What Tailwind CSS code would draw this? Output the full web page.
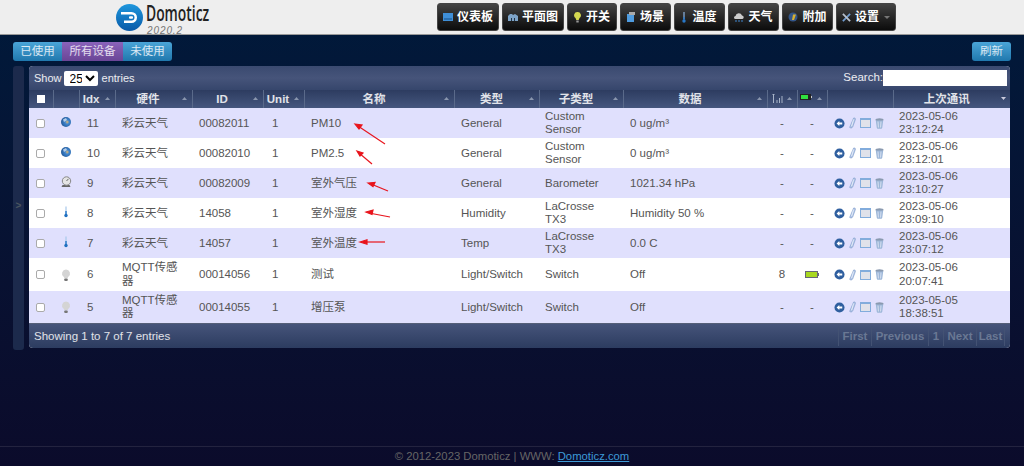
<!DOCTYPE html>
<html lang="en">
<head>
    <meta charset="UTF-8">
    <meta name="viewport" content="width=device-width, initial-scale=1.0">
    <title>Domoticz</title>
    <script src="https://cdn.jsdelivr.net/npm/@tailwindcss/browser@4"></script>
</head>
<body class="h-[466px] w-[1024px] overflow-hidden font-['Liberation_Sans','Noto_Sans_CJK_SC',sans-serif] text-[11.5px] text-[#555]">
<svg class="absolute h-0 w-0">
    <defs>
        <radialGradient id="globe" cx="0.62" cy="0.5" r="0.7"><stop offset="0" stop-color="#e8b868"/><stop offset="0.3" stop-color="#3f86d0"/><stop offset="1" stop-color="#1c4f8c"/></radialGradient>
    </defs>
    <symbol id="i-globe" viewBox="0 0 16 16"><circle cx="8" cy="8" r="5" fill="url(#globe)"/><path d="M5 5.500l3-1.500 1 2-3 2z" fill="#e8eef8" opacity=".7"/></symbol>
    <symbol id="i-gauge" viewBox="0 0 16 16"><path d="M3.500 13h9l-1-2h-7z" fill="#666"/><circle cx="8.500" cy="7" r="4.200" fill="#e4e4e4" stroke="#888"/><path d="M8.500 7l2-2.200" stroke="#666"/></symbol>
    <symbol id="i-thermo" viewBox="0 0 16 16"><rect x="7.400" y="2.500" width="1.200" height="8" fill="#a8c8ec"/><rect x="7.300" y="7" width="1.400" height="4" fill="#2878c8"/><circle cx="8" cy="11.500" r="1.700" fill="#2070c0"/></symbol>
    <symbol id="i-bulb" viewBox="0 0 16 16"><path d="M8 2.500a4 4 0 0 0-2.400 7.200c.5.5.7 1 .7 1.600h3.400c0-.6.2-1.100.7-1.600A4 4 0 0 0 8 2.500z" fill="#d4d4d4"/><rect x="6.300" y="11.500" width="3.400" height="2.500" rx=".8" fill="#777"/></symbol>
    <symbol id="i-back" viewBox="0 0 12 12"><circle cx="6" cy="6" r="5.500" fill="#2f5f9f"/><path d="M2.800 6l3-2.600v1.600h3.200v2H5.800v1.600z" fill="#fff"/></symbol>
    <symbol id="i-pen" viewBox="0 0 8 13"><path d="M5.300.800c1.400-.3 2.400.5 2 1.700L4.200 11c-.6 1.400-3.200 1.600-3.400.4z" fill="#b4c8e8" stroke="#7a98c8" stroke-width=".7"/><path d="M5.200 2.500L3 10" stroke="#f2f6fc" stroke-width=".9"/></symbol>
    <symbol id="i-log" viewBox="0 0 11 10"><rect x=".5" y=".5" width="10" height="9" fill="#e0e2ea" stroke="#82acdc"/><rect x=".5" y=".5" width="10" height="1.500" fill="#82acdc"/></symbol>
    <symbol id="i-trash" viewBox="0 0 9 11"><ellipse cx="4.500" cy="1.800" rx="4" ry="1.500" fill="#8a9ab0"/><path d="M.8 2.500h7.400L7.200 10a1 1 0 0 1-1 .8H2.800a1 1 0 0 1-1-.8z" fill="#9cb6d8"/><path d="M3 3.500l.4 6M6 3.500l-.4 6" stroke="#e8eef8" stroke-width=".8"/></symbol>
    <symbol id="i-sort" viewBox="0 0 7 4"><path d="M0 4l3.500-4L7 4z"/></symbol>
</svg>

<div class="flex h-full flex-col bg-gradient-to-b from-[#001a3b] to-[#0b0b2b]">
    <!-- Top bar -->
    <header class="relative h-[35px] shrink-0 overflow-hidden border-b border-[#999] bg-[#eeeeee]">
        <div class="absolute left-[116px] top-[4px] flex h-[27px] w-[27px] items-center justify-center rounded-full bg-gradient-to-b from-[#1f97dd] to-[#0a5aa8]">
            <svg width="17" height="11" viewBox="0 0 17 11"><path d="M0 0h10.500a5.500 5.500 0 0 1 0 11H3V8.500h7.500a3 3 0 0 0 0-6H0z" fill="#fff"/><rect x="8" y="4.300" width="4" height="2.400" rx="1" fill="#fff"/></svg>
        </div>
        <div class="absolute left-[146px] top-[3px] origin-left scale-x-[0.66] font-['Open_Sans',sans-serif] text-[21px] leading-[20px] font-semibold whitespace-nowrap text-[#222]">Domoticz</div>
        <div class="absolute left-[147px] top-[26px] text-[10px] leading-[10px] tracking-[0.9px] text-[#777] italic">2020.2</div>
        <nav class="absolute left-[437px] top-[3px] flex gap-[3px] text-[12px] font-bold text-white">
            <a class="flex h-[28px] w-[62px] items-center justify-center gap-[4px] rounded-[3px] border border-[#444] bg-gradient-to-b from-[#444] to-[#0c0c0c]"><svg width="10" height="8" viewBox="0 0 10 8"><rect width="10" height="8" fill="#3f8fd8"/><rect x="1" y="5" width="8" height="2" fill="#2a6fb0"/></svg>仪表板</a>
            <a class="flex h-[28px] w-[62px] items-center justify-center gap-[4px] rounded-[3px] border border-[#444] bg-gradient-to-b from-[#444] to-[#0c0c0c]"><svg width="10" height="8" viewBox="0 0 10 8"><path d="M0 3l2-2h2l1 1 2-1 3 2v5H0z" fill="#7ea4c8"/><path d="M3 8V5h1v3zM6 8V5h1v3z" fill="#234"/></svg>平面图</a>
            <a class="flex h-[28px] w-[50px] items-center justify-center gap-[5px] rounded-[3px] border border-[#444] bg-gradient-to-b from-[#444] to-[#0c0c0c]"><svg width="7" height="11" viewBox="0 0 7 11"><path d="M3.500 0a3.300 3.300 0 0 0-2 6L2.300 8h2.400l.8-2a3.300 3.300 0 0 0-2-6z" fill="#d4d850"/><rect x="2.300" y="8.500" width="2.400" height="2" fill="#999"/></svg>开关</a>
            <a class="flex h-[28px] w-[51px] items-center justify-center gap-[5px] rounded-[3px] border border-[#444] bg-gradient-to-b from-[#444] to-[#0c0c0c]"><svg width="8" height="10" viewBox="0 0 8 10"><rect y="2" width="7" height="8" fill="#4f9ce0"/><rect x="2" width="6" height="3" fill="#aaa"/></svg>场景</a>
            <a class="flex h-[28px] w-[51px] items-center justify-center gap-[6px] rounded-[3px] border border-[#444] bg-gradient-to-b from-[#444] to-[#0c0c0c]"><svg width="4" height="11" viewBox="0 0 4 11"><rect x="1.400" width="1.200" height="7" fill="#8cb4e0"/><rect x="1.300" y="5" width="1.400" height="3" fill="#2878c8"/><circle cx="2" cy="9" r="1.700" fill="#2878c8"/></svg>温度</a>
            <a class="flex h-[28px] w-[51px] items-center justify-center gap-[4px] rounded-[3px] border border-[#444] bg-gradient-to-b from-[#444] to-[#0c0c0c]"><svg width="10" height="9" viewBox="0 0 10 9"><path d="M1.500 6a1.500 1.500 0 0 1 0-3A3.400 3.400 0 0 1 8 2.500 1.800 1.800 0 0 1 8.500 6z" fill="#ccc"/><path d="M2 7v2M5 7v2M8 7v2" stroke="#3f86d0"/></svg>天气</a>
            <a class="flex h-[28px] w-[51px] items-center justify-center gap-[4px] rounded-[3px] border border-[#444] bg-gradient-to-b from-[#444] to-[#0c0c0c]"><svg width="10" height="10" viewBox="0 0 10 10"><circle cx="5" cy="5" r="4.500" fill="#33568a"/><path d="M5 2.500h3L6 8H4z" fill="#d8b030"/></svg>附加</a>
            <a class="flex h-[28px] w-[60px] items-center justify-center gap-[4px] rounded-[3px] border border-[#444] bg-gradient-to-b from-[#444] to-[#0c0c0c]"><svg width="9" height="9" viewBox="0 0 10 10"><path d="M1 9l8-8" stroke="#6f9bd0" stroke-width="2"/><path d="M1 1l8 8" stroke="#b8c0cc" stroke-width="2"/></svg>设置<span class="ml-[1px] h-0 w-0 border-x-[3px] border-t-[3px] border-x-transparent border-t-[#777]"></span></a>
        </nav>
    </header>

    <main class="relative flex flex-1 flex-col px-[13px] pt-[7px]">
        <!-- Filter buttons -->
        <div class="flex h-[19px] items-stretch justify-between text-[11.5px] text-white/80">
            <div class="flex overflow-hidden rounded-[3px]">
                <button class="w-[49px] bg-gradient-to-b from-[#4aa5d8] to-[#1f78ad]">已使用</button>
                <button class="w-[61px] bg-gradient-to-b from-[#8a63bb] to-[#6a4596]">所有设备</button>
                <button class="w-[49px] bg-gradient-to-b from-[#4aa5d8] to-[#1f78ad]">未使用</button>
            </div>
            <button class="w-[39px] rounded-[3px] bg-gradient-to-b from-[#4aa5d8] to-[#1f78ad]">刷新</button>
        </div>

        <div class="mt-[5px] flex gap-[5px]">
            <!-- Collapsed side panel -->
            <div class="flex h-[284px] w-[11px] items-center justify-center rounded-[3px] bg-[#1c2a4c] pb-[6px] text-[10px] font-bold text-[#4a5560]">&gt;</div>

            <!-- Devices panel -->
            <div class="h-[282px] w-[981px] overflow-hidden rounded-[4px] bg-white">
                <div class="flex h-[24px] items-center justify-between bg-gradient-to-b from-[#3a4a70] via-[#46547a] to-[#36466c] pr-[3px] pl-[5px] text-[11px] text-white/90">
                    <div class="flex items-center gap-[2px]">Show
                        <select class="mr-[2px] h-[15px] w-[34px] rounded-[2px] bg-white pl-[2px] text-[12px] text-black"><option>25</option></select>
                        entries</div>
                    <div class="flex items-center text-[11.5px]">Search:<input class="h-[16px] w-[124px] bg-white"></div>
                </div>

                <table class="w-full table-fixed border-collapse">
                    <colgroup>
                        <col class="w-[24px]"><col class="w-[26px]"><col class="w-[36px]"><col class="w-[77px]"><col class="w-[71px]"><col class="w-[41px]"><col class="w-[150px]"><col class="w-[85px]"><col class="w-[84px]"><col class="w-[144px]"><col class="w-[30px]"><col class="w-[30px]"><col class="w-[66px]"><col>
                    </colgroup>
                    <thead>
                        <tr class="h-[18px] bg-gradient-to-b from-[#2d3c60] to-[#45567e] pt-[1px] text-[11.5px] font-bold text-white/85">
                            <th class="border-r border-[#5a6a8a]"><span class="mx-auto block h-[8px] w-[8px] bg-white"></span></th>
                            <th class="border-r border-[#5a6a8a]"></th>
                            <th class="relative border-r border-[#5a6a8a] pt-[1px] pr-[12px]">Idx<svg class="absolute top-[7px] right-[5px] fill-[#8a96ae]" width="5" height="3"><use href="#i-sort"/></svg></th>
                            <th class="relative border-r border-[#5a6a8a] pt-[1px] pr-[11px]">硬件<svg class="absolute top-[7px] right-[5px] fill-[#8a96ae]" width="5" height="3"><use href="#i-sort"/></svg></th>
                            <th class="relative border-r border-[#5a6a8a] pt-[1px] pr-[11px]">ID<svg class="absolute top-[7px] right-[5px] fill-[#8a96ae]" width="5" height="3"><use href="#i-sort"/></svg></th>
                            <th class="relative border-r border-[#5a6a8a] pt-[1px] pr-[11px]">Unit<svg class="absolute top-[7px] right-[5px] fill-[#8a96ae]" width="5" height="3"><use href="#i-sort"/></svg></th>
                            <th class="relative border-r border-[#5a6a8a] pt-[1px] pr-[10px]">名称<svg class="absolute top-[7px] right-[5px] fill-[#8a96ae]" width="5" height="3"><use href="#i-sort"/></svg></th>
                            <th class="relative border-r border-[#5a6a8a] pt-[1px] pr-[10px]">类型<svg class="absolute top-[7px] right-[5px] fill-[#8a96ae]" width="5" height="3"><use href="#i-sort"/></svg></th>
                            <th class="relative border-r border-[#5a6a8a] pt-[1px] pr-[10px]">子类型<svg class="absolute top-[7px] right-[5px] fill-[#8a96ae]" width="5" height="3"><use href="#i-sort"/></svg></th>
                            <th class="relative border-r border-[#5a6a8a] pt-[1px] pr-[10px]">数据<svg class="absolute top-[7px] right-[5px] fill-[#8a96ae]" width="5" height="3"><use href="#i-sort"/></svg></th>
                            <th class="relative border-r border-[#5a6a8a]"><svg class="absolute top-[4px] left-[3px]" width="12" height="10" viewBox="0 0 12 10"><path d="M1 0h3M2.500 0v9M6 9V6M8.500 9V4M11 9V2" stroke="#a8b4c8" fill="none"/></svg><svg class="absolute top-[7px] right-[5px] fill-[#8a96ae]" width="5" height="3"><use href="#i-sort"/></svg></th>
                            <th class="relative border-r border-[#5a6a8a]"><svg class="absolute top-[4px] left-[2px]" width="12" height="7" viewBox="0 0 12 7"><rect width="11" height="6" fill="#222"/><rect x="1" y="1" width="7" height="4" fill="#30e040"/><rect x="11" y="2" width="1" height="2" fill="#ccc"/></svg><svg class="absolute top-[7px] right-[5px] fill-[#8a96ae]" width="5" height="3"><use href="#i-sort"/></svg></th>
                            <th class="border-r border-[#5a6a8a]"></th>
                            <th class="relative pt-[1px] pr-[10px]">上次通讯<svg class="absolute top-[7px] right-[4px] rotate-180 fill-[#ccd]" width="5" height="3"><use href="#i-sort"/></svg></th>
                        </tr>
                    </thead>
                    <tbody class="leading-[13.5px]">
                        <tr class="h-[30px] bg-[#e0e0fd]">
                            <td><input type="checkbox" class="ml-[7px] block size-[9px] appearance-none rounded-[2px] border border-[#aaa] bg-white"></td>
                            <td><svg class="mb-[2px] ml-[5px] block" width="16" height="16"><use href="#i-globe"/></svg></td>
                            <td class="pl-[8px]">11</td><td class="pr-[7px] pl-[7px]">彩云天气</td><td class="pl-[7px]">00082011</td><td class="pl-[9px]">1</td><td class="pl-[7px]">PM10</td><td class="pl-[7px]">General</td><td class="pr-[10px] pl-[6px]">Custom Sensor</td><td class="pl-[7px]">0 ug/m³</td><td class="text-center">-</td><td class="text-center">-</td>
                            <td><div class="ml-[7px] flex items-center gap-[4px]"><svg width="11" height="11"><use href="#i-back"/></svg><svg width="7" height="12"><use href="#i-pen"/></svg><svg width="11" height="10"><use href="#i-log"/></svg><svg width="9" height="11"><use href="#i-trash"/></svg></div></td>
                            <td class="pl-[6px]">2023-05-06<br>23:12:24</td>
                        </tr>
                        <tr class="h-[30px] bg-white">
                            <td><input type="checkbox" class="ml-[7px] block size-[9px] appearance-none rounded-[2px] border border-[#aaa] bg-white"></td>
                            <td><svg class="mb-[2px] ml-[5px] block" width="16" height="16"><use href="#i-globe"/></svg></td>
                            <td class="pl-[8px]">10</td><td class="pr-[7px] pl-[7px]">彩云天气</td><td class="pl-[7px]">00082010</td><td class="pl-[9px]">1</td><td class="pl-[7px]">PM2.5</td><td class="pl-[7px]">General</td><td class="pr-[10px] pl-[6px]">Custom Sensor</td><td class="pl-[7px]">0 ug/m³</td><td class="text-center">-</td><td class="text-center">-</td>
                            <td><div class="ml-[7px] flex items-center gap-[4px]"><svg width="11" height="11"><use href="#i-back"/></svg><svg width="7" height="12"><use href="#i-pen"/></svg><svg width="11" height="10"><use href="#i-log"/></svg><svg width="9" height="11"><use href="#i-trash"/></svg></div></td>
                            <td class="pl-[6px]">2023-05-06<br>23:12:01</td>
                        </tr>
                        <tr class="h-[30px] bg-[#e0e0fd]">
                            <td><input type="checkbox" class="ml-[7px] block size-[9px] appearance-none rounded-[2px] border border-[#aaa] bg-white"></td>
                            <td><svg class="mb-[2px] ml-[5px] block" width="16" height="16"><use href="#i-gauge"/></svg></td>
                            <td class="pl-[8px]">9</td><td class="pr-[7px] pl-[7px]">彩云天气</td><td class="pl-[7px]">00082009</td><td class="pl-[9px]">1</td><td class="pl-[7px]">室外气压</td><td class="pl-[7px]">General</td><td class="pr-[10px] pl-[6px]">Barometer</td><td class="pl-[7px]">1021.34 hPa</td><td class="text-center">-</td><td class="text-center">-</td>
                            <td><div class="ml-[7px] flex items-center gap-[4px]"><svg width="11" height="11"><use href="#i-back"/></svg><svg width="7" height="12"><use href="#i-pen"/></svg><svg width="11" height="10"><use href="#i-log"/></svg><svg width="9" height="11"><use href="#i-trash"/></svg></div></td>
                            <td class="pl-[6px]">2023-05-06<br>23:10:27</td>
                        </tr>
                        <tr class="h-[30px] bg-white">
                            <td><input type="checkbox" class="ml-[7px] block size-[9px] appearance-none rounded-[2px] border border-[#aaa] bg-white"></td>
                            <td><svg class="mb-[2px] ml-[5px] block" width="16" height="16"><use href="#i-thermo"/></svg></td>
                            <td class="pl-[8px]">8</td><td class="pr-[7px] pl-[7px]">彩云天气</td><td class="pl-[7px]">14058</td><td class="pl-[9px]">1</td><td class="pl-[7px]">室外湿度</td><td class="pl-[7px]">Humidity</td><td class="pr-[10px] pl-[6px]">LaCrosse TX3</td><td class="pl-[7px]">Humidity 50 %</td><td class="text-center">-</td><td class="text-center">-</td>
                            <td><div class="ml-[7px] flex items-center gap-[4px]"><svg width="11" height="11"><use href="#i-back"/></svg><svg width="7" height="12"><use href="#i-pen"/></svg><svg width="11" height="10"><use href="#i-log"/></svg><svg width="9" height="11"><use href="#i-trash"/></svg></div></td>
                            <td class="pl-[6px]">2023-05-06<br>23:09:10</td>
                        </tr>
                        <tr class="h-[30px] bg-[#e0e0fd]">
                            <td><input type="checkbox" class="ml-[7px] block size-[9px] appearance-none rounded-[2px] border border-[#aaa] bg-white"></td>
                            <td><svg class="mb-[2px] ml-[5px] block" width="16" height="16"><use href="#i-thermo"/></svg></td>
                            <td class="pl-[8px]">7</td><td class="pr-[7px] pl-[7px]">彩云天气</td><td class="pl-[7px]">14057</td><td class="pl-[9px]">1</td><td class="pl-[7px]">室外温度</td><td class="pl-[7px]">Temp</td><td class="pr-[10px] pl-[6px]">LaCrosse TX3</td><td class="pl-[7px]">0.0 C</td><td class="text-center">-</td><td class="text-center">-</td>
                            <td><div class="ml-[7px] flex items-center gap-[4px]"><svg width="11" height="11"><use href="#i-back"/></svg><svg width="7" height="12"><use href="#i-pen"/></svg><svg width="11" height="10"><use href="#i-log"/></svg><svg width="9" height="11"><use href="#i-trash"/></svg></div></td>
                            <td class="pl-[6px]">2023-05-06<br>23:07:12</td>
                        </tr>
                        <tr class="h-[33px] bg-white">
                            <td><input type="checkbox" class="ml-[7px] block size-[9px] appearance-none rounded-[2px] border border-[#aaa] bg-white"></td>
                            <td><svg class="ml-[5px] block" width="16" height="16"><use href="#i-bulb"/></svg></td>
                            <td class="pl-[8px]">6</td><td class="pr-[7px] pl-[7px]">MQTT传感器</td><td class="pl-[7px]">00014056</td><td class="pl-[9px]">1</td><td class="pl-[7px]">测试</td><td class="pl-[7px]">Light/Switch</td><td class="pr-[10px] pl-[6px]">Switch</td><td class="pl-[7px]">Off</td><td class="text-center">8</td>
                            <td><svg class="mx-auto block" width="14" height="7" viewBox="0 0 14 7"><rect x=".5" y=".5" width="12" height="6" fill="#a8d820" stroke="#667"/><rect x="13" y="2" width="1" height="3" fill="#667"/></svg></td>
                            <td><div class="ml-[7px] flex items-center gap-[4px]"><svg width="11" height="11"><use href="#i-back"/></svg><svg width="7" height="12"><use href="#i-pen"/></svg><svg width="11" height="10"><use href="#i-log"/></svg><svg width="9" height="11"><use href="#i-trash"/></svg></div></td>
                            <td class="pl-[6px]">2023-05-06<br>20:07:41</td>
                        </tr>
                        <tr class="h-[32px] bg-[#e0e0fd]">
                            <td><input type="checkbox" class="ml-[7px] block size-[9px] appearance-none rounded-[2px] border border-[#aaa] bg-white"></td>
                            <td><svg class="ml-[5px] block" width="16" height="16"><use href="#i-bulb"/></svg></td>
                            <td class="pl-[8px]">5</td><td class="pr-[7px] pl-[7px]">MQTT传感器</td><td class="pl-[7px]">00014055</td><td class="pl-[9px]">1</td><td class="pl-[7px]">增压泵</td><td class="pl-[7px]">Light/Switch</td><td class="pr-[10px] pl-[6px]">Switch</td><td class="pl-[7px]">Off</td><td class="text-center">-</td><td class="text-center">-</td>
                            <td><div class="ml-[7px] flex items-center gap-[4px]"><svg width="11" height="11"><use href="#i-back"/></svg><svg width="7" height="12"><use href="#i-pen"/></svg><svg width="11" height="10"><use href="#i-log"/></svg><svg width="9" height="11"><use href="#i-trash"/></svg></div></td>
                            <td class="pl-[6px]">2023-05-05<br>18:38:51</td>
                        </tr>
                    </tbody>
                </table>

                <div class="flex h-[25px] items-center justify-between border-t border-[#555f78] bg-gradient-to-b from-[#46547a] to-[#2c3c60] pr-[5px] pl-[5px] text-white/85">
                    <div>Showing 1 to 7 of 7 entries</div>
                    <div class="flex h-[20px] items-stretch font-bold text-[#6a7894]">
                        <span class="flex w-[33px] items-center justify-center border-l border-[#435273]">First</span>
                        <span class="flex w-[57px] items-center justify-center border-l border-[#435273]">Previous</span>
                        <span class="flex w-[15px] items-center justify-center border-l border-[#435273]">1</span>
                        <span class="flex w-[33px] items-center justify-center border-l border-[#435273]">Next</span>
                        <span class="flex w-[29px] items-center justify-center border-x border-[#435273]">Last</span>
                    </div>
                </div>
            </div>
        </div>

        <!-- Red annotation arrows -->
        <svg class="pointer-events-none absolute top-0 left-0" width="1024" height="431" viewBox="0 35 1024 431">
            <g stroke="#e8141c" stroke-width="1.200" fill="#e8141c">
                <path d="M385 144L358 126"/><path d="M355 124l7 1-3 4z"/>
                <path d="M372 164L359 153"/><path d="M357 151l6 2-3 3z"/>
                <path d="M388 191L371 184"/><path d="M368 183l7-.5-2 4z"/>
                <path d="M390 217L369 213"/><path d="M366 212l7-2-1 4.500z"/>
                <path d="M385 242L363 242"/><path d="M360 242l7-2.200v4.400z"/>
            </g>
        </svg>
    </main>

    <footer class="mt-auto flex h-[20px] shrink-0 items-center justify-center border-t border-[#23233f] text-[11.3px] text-[#666]">© 2012-2023 Domoticz | WWW:&nbsp;<a class="text-[#3d9ad8] underline">Domoticz.com</a></footer>
</div>
</body>
</html>
